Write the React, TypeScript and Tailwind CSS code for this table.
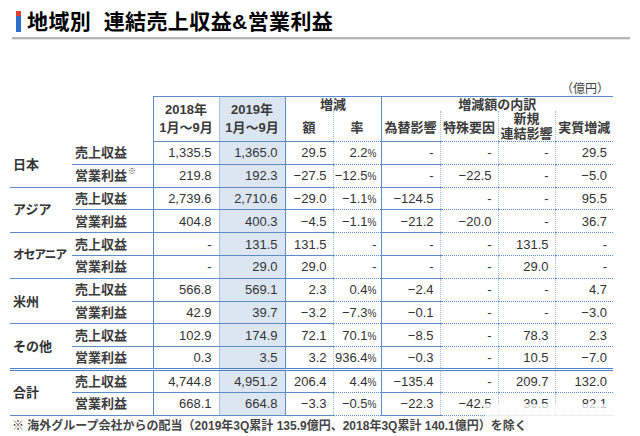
import { ReactNode } from "react";

type Row = {
  item: string;
  note?: boolean;
  vals: string[];
};

type Group = { region: string; total?: boolean; rows: Row[] };

const GROUPS: Group[] = [
  {
    region: "日本",
    rows: [
      { item: "売上収益", vals: ["1,335.5", "1,365.0", "29.5", "2.2%", "-", "-", "-", "29.5"] },
      { item: "営業利益", note: true, vals: ["219.8", "192.3", "−27.5", "−12.5%", "-", "−22.5", "-", "−5.0"] },
    ],
  },
  {
    region: "アジア",
    rows: [
      { item: "売上収益", vals: ["2,739.6", "2,710.6", "−29.0", "−1.1%", "−124.5", "-", "-", "95.5"] },
      { item: "営業利益", vals: ["404.8", "400.3", "−4.5", "−1.1%", "−21.2", "−20.0", "-", "36.7"] },
    ],
  },
  {
    region: "オセアニア",
    rows: [
      { item: "売上収益", vals: ["-", "131.5", "131.5", "-", "-", "-", "131.5", "-"] },
      { item: "営業利益", vals: ["-", "29.0", "29.0", "-", "-", "-", "29.0", "-"] },
    ],
  },
  {
    region: "米州",
    rows: [
      { item: "売上収益", vals: ["566.8", "569.1", "2.3", "0.4%", "−2.4", "-", "-", "4.7"] },
      { item: "営業利益", vals: ["42.9", "39.7", "−3.2", "−7.3%", "−0.1", "-", "-", "−3.0"] },
    ],
  },
  {
    region: "その他",
    rows: [
      { item: "売上収益", vals: ["102.9", "174.9", "72.1", "70.1%", "−8.5", "-", "78.3", "2.3"] },
      { item: "営業利益", vals: ["0.3", "3.5", "3.2", "936.4%", "−0.3", "-", "10.5", "−7.0"] },
    ],
  },
  {
    region: "合計",
    total: true,
    rows: [
      { item: "売上収益", vals: ["4,744.8", "4,951.2", "206.4", "4.4%", "−135.4", "-", "209.7", "132.0"] },
      { item: "営業利益", vals: ["668.1", "664.8", "−3.3", "−0.5%", "−22.3", "−42.5", "39.5", "82.1"] },
    ],
  },
];

// left border of each value column (2018 .. 実質増減)
const COL_BORDER = [
  "border-l border-l-[#5b8ccb]",
  "border-l border-l-[#a9c3e6]",
  "border-l border-l-[#5b8ccb]",
  "border-l border-dotted border-l-[#9fbbe2]",
  "border-l border-l-[#5b8ccb]",
  "border-l border-dotted border-l-[#9fbbe2]",
  "border-l border-dotted border-l-[#9fbbe2]",
  "border-l border-dotted border-l-[#9fbbe2]",
];

function Val({ v }: { v: string }) {
  if (v.endsWith("%")) {
    return (
      <>
        {v.slice(0, -1)}
        <span className="text-[10px]">%</span>
      </>
    );
  }
  return <>{v}</>;
}

function Th({ className, children, ...rest }: { className?: string; children?: ReactNode; colSpan?: number; rowSpan?: number }) {
  return (
    <th {...rest} className={"p-0 font-bold text-[13px] text-[#3a3a3a] align-middle text-center " + (className ?? "")}>
      {children}
    </th>
  );
}

export default function App() {
  return (
    <div
      className="relative w-[640px] h-[436px] bg-white overflow-hidden text-[#333]"
      style={{ fontFamily: '"Liberation Sans", "Noto Sans CJK JP", sans-serif' }}
    >
      {/* title */}
      <div className="flex items-center pt-[11px] pl-4 h-[32px]">
        <div className="flex flex-col w-[5px] h-[21px]">
          <div className="h-[5px] bg-[#e8402a]" />
          <div className="flex-1 bg-[#2a6fc9]" />
        </div>
        <h1 className="ml-[6px] text-[21px] leading-none font-bold text-black tracking-[0.4px]">
          地域別&nbsp; 連結売上収益&amp;営業利益
        </h1>
      </div>
      <div className="mt-[5px] ml-3 w-[618px] h-[2px] bg-[#b5b5b5] shadow-[0_1px_1px_#e2e2e2]" />

      <div className="mt-[43px] w-[613px] text-right text-[12px] leading-[14px] pr-1 text-[#444]">（億円）</div>

      <div className="relative ml-[10px] w-[603px]">
        <table className="table-fixed border-collapse w-[603px] text-[13px] leading-none">
          <colgroup>
            <col className="w-[62px]" />
            <col className="w-[81px]" />
            <col className="w-[66px]" />
            <col className="w-[66px]" />
            <col className="w-[48px]" />
            <col className="w-[48px]" />
            <col className="w-[59px]" />
            <col className="w-[58px]" />
            <col className="w-[57px]" />
            <col className="w-[58px]" />
          </colgroup>
          <thead>
            <tr className="h-[14px]">
              <Th colSpan={2} rowSpan={2} />
              <Th rowSpan={2} className={"border-t border-t-[#5b8ccb] border-b border-b-[#5b8ccb] leading-[18px] " + COL_BORDER[0]}>
                2018年
                <br />
                1月〜9月
              </Th>
              <Th rowSpan={2} className={"bg-[#dce6f3] border-t border-t-[#5b8ccb] border-b border-b-[#5b8ccb] leading-[18px] " + COL_BORDER[1]}>
                2019年
                <br />
                1月〜9月
              </Th>
              <Th colSpan={2} className={"border-t border-t-[#5b8ccb] leading-[13px] pt-px " + COL_BORDER[2]}>
                増減
              </Th>
              <Th colSpan={4} className={"border-t border-t-[#5b8ccb] leading-[13px] " + COL_BORDER[4]}>
                増減額の内訳
              </Th>
            </tr>
            <tr className="h-[30px]">
              <Th className={"border-b border-b-[#5b8ccb] pt-[3px] " + COL_BORDER[2]}>額</Th>
              <Th className={"border-b border-b-[#5b8ccb] pt-[3px] " + COL_BORDER[3]}>率</Th>
              <Th className={"border-b border-b-[#5b8ccb] pt-[3px] " + COL_BORDER[4]}>為替影響</Th>
              <Th className={"border-b border-b-[#5b8ccb] pt-[3px] " + COL_BORDER[5]}>特殊要因</Th>
              <Th className={"border-b border-b-[#5b8ccb] leading-[15px] " + COL_BORDER[6]}>
                新規
                <br />
                連結影響
              </Th>
              <Th className={"border-b border-b-[#5b8ccb] pt-[3px] " + COL_BORDER[7]}>実質増減</Th>
            </tr>
          </thead>
          <tbody>
            {GROUPS.map((g) =>
              g.rows.map((r, i) => (
                <tr
                  key={g.region + r.item}
                  className={
                    "h-[22.8px] " +
                    (i === 0 && g.total ? "border-t-[3px] border-double border-t-[#4f82c4]" : "")
                  }
                >
                  {i === 0 && (
                    <td
                      rowSpan={2}
                      className={
                        "p-0 pl-[3px] font-bold text-[#333] whitespace-nowrap border-b border-b-[#5b8ccb] align-middle " +
                        (g.region.length > 3 ? "text-[12px] tracking-[-1.4px]" : "text-[13px]")
                      }
                    >
                      {g.region}
                    </td>
                  )}
                  <td className="p-0 pl-[3px] font-bold text-[13px] text-[#3c3c3c] border-b border-b-[#5b8ccb] whitespace-nowrap">
                    {r.item}
                    {r.note && <span className="inline-block align-top text-[8px] leading-none font-normal ml-px -mt-px">※</span>}
                  </td>
                  {r.vals.map((v, j) => (
                    <td
                      key={j}
                      className={
                        "p-0 text-right border-b border-b-[#5b8ccb] " +
                        (j === 1 ? "bg-[#dce6f3] " : "") +
                        (j < 2 ? "pr-[7px] " : j === 3 ? "pr-[4px] " : "pr-[6px] ") +
                        COL_BORDER[j]
                      }
                    >
                      <Val v={v} />
                    </td>
                  ))}
                </tr>
              ))
            )}
          </tbody>
        </table>
        {/* watermark over the bottom-right corner */}
        <div className="absolute right-0 bottom-[-2px] w-[128px] h-[14px] bg-white/75" />
      </div>

      <p className="mt-[3px] ml-3 text-[12px] leading-[14px] font-bold text-[#444] whitespace-nowrap">
        ※ 海外グループ会社からの配当（2019年3Q累計 135.9億円、2018年3Q累計 140.1億円）を除く
      </p>
    </div>
  );
}
